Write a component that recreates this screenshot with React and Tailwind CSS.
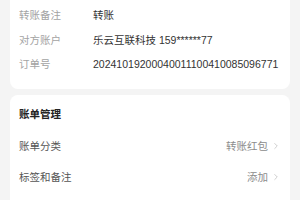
import { ChevronRight } from "lucide-react";

const font = { fontFamily: '"Liberation Sans", "Noto Sans CJK SC", sans-serif' };

function InfoRow({ label, value }) {
    return (
        <div className="flex h-[24.5px] items-center">
            <div className="w-[74px] shrink-0 text-[#a3a3a3]">{label}</div>
            <div className="text-[#333333] whitespace-nowrap">{value}</div>
        </div>
    );
}

function LinkRow({ label, value }) {
    return (
        <div className="flex h-[31px] items-center justify-between">
            <div className="text-[#555555]">{label}</div>
            <div className="flex items-center gap-[3px] text-[#8c8c8c]">
                <span>{value}</span>
                <ChevronRight width={10} height={10} strokeWidth={1.5} className="text-[#b0b0b0]" />
            </div>
        </div>
    );
}

export default function App() {
    return (
        <div
            className="h-[200px] w-[300px] overflow-hidden bg-[#f4f4f4] px-[10px] text-[10.5px] leading-none"
            style={font}
        >
            <div className="-mt-4 rounded-[8px] bg-white px-[9px] pt-[19px] pb-[12.5px]">
                <InfoRow label="转账备注" value="转账" />
                <InfoRow label="对方账户" value="乐云互联科技 159******77" />
                <InfoRow label="订单号" value="20241019200040011100410085096771" />
            </div>

            <div className="mt-[6px] rounded-[8px] bg-white px-[9px] pt-[12px] pb-4">
                <div className="mb-[9.5px] flex h-[14px] items-center font-bold text-[#222222]">
                    账单管理
                </div>
                <LinkRow label="账单分类" value="转账红包" />
                <LinkRow label="标签和备注" value="添加" />
            </div>
        </div>
    );
}
